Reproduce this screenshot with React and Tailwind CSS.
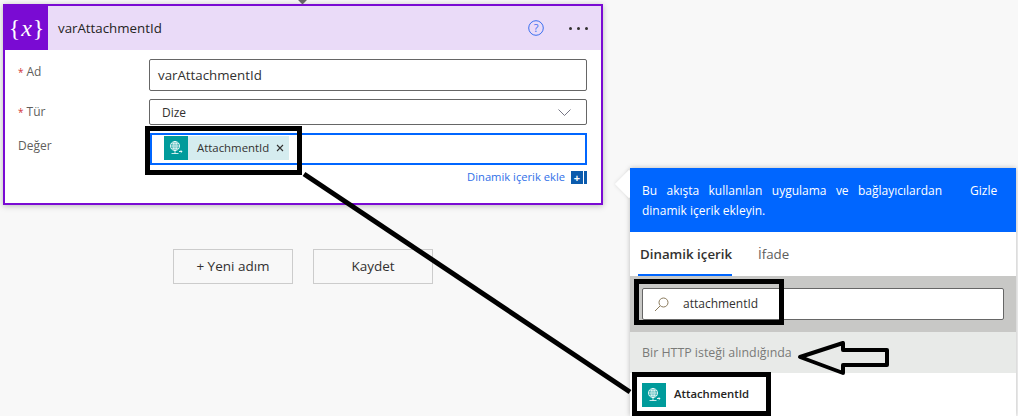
const font = { fontFamily: '"Open Sans", "Noto Sans", sans-serif' };

function GlobeIcon({ size = 16 }) {
  return (
    <svg width={size} height={size} viewBox="0 0 16 16" fill="none" stroke="white" strokeWidth="0.8">
      <circle cx="7" cy="6" r="4.6" />
      <ellipse cx="7" cy="6" rx="2" ry="4.6" />
      <path d="M2.4 6h9.2M3 3.8h8M3 8.2h8M7 1.4v9.2" />
      <path d="M3.5 13.5h7M7 10.6v2.9" />
      <path d="M11 11.5h3l-1.2-1.2M14 11.5l-1.2 1.2" strokeWidth="0.9" />
    </svg>
  );
}

function Field({ label, required, children, className }) {
  return (
    <div className={"flex " + className}>
      <div className="w-[144px] pl-[13px] text-[12px] text-[#605e5c] pt-[4px]">
        {required && <span className="text-[#d13438] text-[10px] mr-[3px]">*</span>}
        {label}
      </div>
      {children}
    </div>
  );
}

function Card() {
  return (
    <div className="w-[600px] h-[201px] border-2 border-[#7a0bd3] bg-white shadow-[0_1px_6px_rgba(0,0,0,0.25)]">
      <div className="flex items-center h-[44px] bg-[#eadbf8]">
        <div className="w-[43px] h-[44px] bg-[#7a0bd3] text-white flex items-center justify-center text-[24px] leading-none" style={{ fontFamily: '"Liberation Serif", serif' }}>
          <span className="font-light">{"{"}</span>
          <span className="italic mx-[1px]">x</span>
          <span className="font-light">{"}"}</span>
        </div>
        <div className="ml-[10px] pt-[2px] text-[13.3px] text-[#252423]">varAttachmentId</div>
        <svg className="ml-auto" width="18" height="18" viewBox="0 0 18 18" fill="none">
          <circle cx="9" cy="9" r="7.3" stroke="#3b6ff0" strokeWidth="1" />
          <text x="9" y="13" textAnchor="middle" fontSize="11" fill="#3b6ff0" fontFamily="Open Sans">?</text>
        </svg>
        <div className="flex gap-[5px] ml-[24px] mr-[13px]">
          <span className="w-[3px] h-[3px] rounded-full bg-[#323130]" />
          <span className="w-[3px] h-[3px] rounded-full bg-[#323130]" />
          <span className="w-[3px] h-[3px] rounded-full bg-[#323130]" />
        </div>
      </div>

      <Field label="Ad" required className="mt-[9px] h-[32px]">
        <div className="w-[438px] h-[32px] border border-[#666] rounded-[2px] pl-[8px] pt-[1px] flex items-center text-[13.3px] text-[#323130]">
          varAttachmentId
        </div>
      </Field>
      <Field label="Tür" required className="mt-[8px] h-[26px]">
        <div className="w-[438px] h-[26px] border border-[#666] rounded-[2px] pl-[12px] pr-[15px] pt-[1px] flex items-center justify-between text-[12px] text-[#323130]">
          Dize
          <svg width="13" height="7" viewBox="0 0 13 7" fill="none" stroke="#667" strokeWidth="0.9">
            <path d="M0.5 0.5l6 6 6-6" />
          </svg>
        </div>
      </Field>
      <Field label="Değer" className="mt-[8px] h-[32px]">
        <div className="ml-[1px] w-[437px] h-[32px] border-2 border-[#0066ff] pl-[12px] pt-[1px]">
          <div className="flex items-center w-[125px] h-[24px] bg-[#d5ecef] text-[11.4px] text-[#323130]">
            <div className="w-[24px] h-[24px] bg-[#009b9b] flex items-center justify-center">
              <GlobeIcon />
            </div>
            <span className="ml-[9px]">AttachmentId</span>
            <svg className="ml-[7px]" width="8" height="8" viewBox="0 0 8 8" stroke="#323130" strokeWidth="1.1">
              <path d="M1 1l6 6M7 1l-6 6" />
            </svg>
          </div>
        </div>
      </Field>
      <div className="flex items-center justify-end h-[14px] mt-[5px] pr-[14px] text-[11.2px] text-[#2f6fe8]">
        <span className="mr-[6px] pt-[1px]">Dinamik içerik ekle</span>
        <div className="w-[12px] h-[13px] bg-[#0b5bad] text-white flex items-center justify-center text-[11px] font-bold leading-none">+</div>
        <div className="w-[3px] h-[13px] bg-[#0b5bad] ml-[1px]" />
      </div>
    </div>
  );
}

function Panel() {
  return (
    <div className="relative w-[386px] h-[248px] bg-white shadow-[0_0_5px_rgba(0,0,0,0.25)]">
      {/* callout notch */}
      <div className="absolute left-[-11px] top-[6px] w-[20px] h-[20px] rotate-45 bg-white shadow-[0_0_4px_rgba(0,0,0,0.12)]" />
      <div className="relative flex h-[64px] bg-[#0066ff] text-white text-[12px] leading-[20px] pl-[12px] pt-[13px]">
        <div className="w-[300px]">
          <div className="flex justify-between">
            <span>Bu</span><span>akışta</span><span>kullanılan</span><span>uygulama</span><span>ve</span><span>bağlayıcılardan</span>
          </div>
          <div>dinamik içerik ekleyin.</div>
        </div>
        <span className="ml-[28px]">Gizle</span>
      </div>
      <div className="flex h-[44px] text-[13.3px]">
        <div className="ml-[8px] w-[94px] h-[44px] border-b-2 border-[#0066ff] pl-[2px] pt-[13px] font-semibold text-[#323130] whitespace-nowrap">Dinamik içerik</div>
        <div className="ml-[26px] pt-[13px] text-[#605e5c]">İfade</div>
      </div>
      <div className="h-[56px] bg-[#c8c8c6] pl-[12px] pt-[12px]">
        <div className="flex items-center w-[362px] h-[32px] bg-white border border-[#666] rounded-[2px] text-[12px] text-[#323130]">
          <svg className="ml-[11px]" width="15" height="15" viewBox="0 0 15 15" fill="none" stroke="#8a7a5c" strokeWidth="1">
            <circle cx="9.5" cy="5.5" r="4.5" />
            <path d="M6 9l-5 5" />
          </svg>
          <span className="ml-[14px]">attachmentId</span>
        </div>
      </div>
      <div className="h-[41px] bg-[#e8eae8] pl-[12px] pt-[2px] flex items-center text-[12.4px] text-[#7a7a78]">Bir HTTP isteği alındığında</div>
      <div className="flex items-center h-[43px] pl-[12px]">
        <div className="w-[24px] h-[24px] bg-[#009b9b] flex items-center justify-center">
          <GlobeIcon />
        </div>
        <span className="ml-[8px] text-[11.3px] font-semibold text-[#252423]">AttachmentId</span>
      </div>
    </div>
  );
}

export default function App() {
  return (
    <div className="relative w-[1018px] h-[416px] overflow-hidden bg-[#f8f8f8] flex" style={font}>
      <div className="w-[630px] pl-[3px] pt-[4px] shrink-0">
        <Card />
        <div className="flex gap-[20px] mt-[44px] ml-[170px] text-[13.5px] text-[#323130]">
          <div className="w-[120px] h-[35px] border border-[#ccc] flex items-center justify-center">+ Yeni adım</div>
          <div className="w-[120px] h-[35px] border border-[#ccc] flex items-center justify-center">Kaydet</div>
        </div>
      </div>
      <div className="pt-[168px]">
        <Panel />
      </div>

      {/* hand drawn annotations on top of the screenshot */}
      <div className="absolute left-[299px] top-[-4px] w-[7px] h-[7px] rotate-45 bg-[#666]" />
      <div className="absolute left-[145px] top-[126px] w-[157px] h-[49px] border-[5px] border-black" />
      <div className="absolute left-[634px] top-[279px] w-[150px] h-[46px] border-[5px] border-black" />
      <div className="absolute left-[632px] top-[372px] w-[139px] h-[44px] border-[5px] border-black" />
      <svg className="absolute left-0 top-0" width="1018" height="416" fill="none" stroke="black">
        <path d="M304 174L630 392" strokeWidth="5" />
        <path d="M800 357L843 343V350H887V365H843V373Z" strokeWidth="4" strokeLinejoin="round" />
      </svg>
    </div>
  );
}
